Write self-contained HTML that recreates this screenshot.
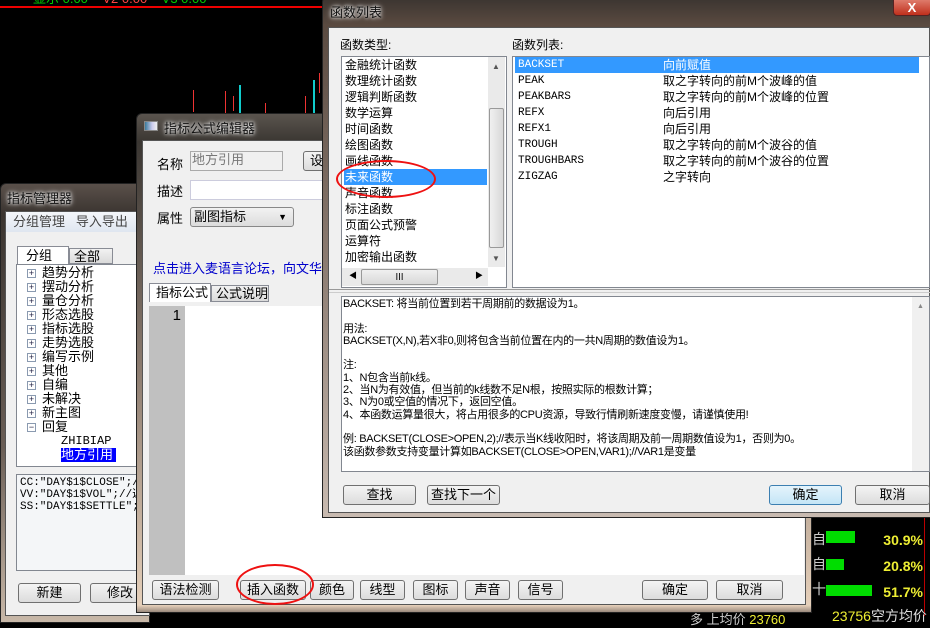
<!DOCTYPE html>
<html><head><meta charset="utf-8">
<style>
*{box-sizing:border-box;margin:0;padding:0}
body{width:930px;height:616px;background:#000;position:relative;overflow:hidden;font-family:"Liberation Sans","Noto Sans CJK SC",sans-serif;font-size:12px;color:#000}
.a{position:absolute}
.win{position:absolute;background:linear-gradient(180deg,#5a504a,#3a3430 30px,#6a5e56 60%,#c8b8a8);border:1px solid #222;border-radius:6px 6px 0 0}
.title{position:absolute;font-size:13px;color:#111;text-shadow:0 0 6px #fff,0 0 3px #fff}
.client{position:absolute;background:#f0f0f0;border:1px solid #555}
.btn{position:absolute;height:20px;border:1px solid #707070;border-radius:3px;background:linear-gradient(#f4f4f4,#dcdcdc);text-align:center;line-height:18px;font-size:13px}
.btnb{border-color:#3c7fb1;background:linear-gradient(#e5f4fc,#c4e5f6)}
.box{position:absolute;background:#fff;border:1px solid #828790}
.li{height:16px;line-height:16px;white-space:nowrap}
.tr{position:absolute;left:27px;height:14px;line-height:14px;font-size:13px;white-space:nowrap}
.tr i{display:inline-block;width:9px;height:9px;border:1px solid #8a9ab0;font-style:normal;font-size:9px;line-height:7px;text-align:center;color:#224;margin-right:6px;vertical-align:1px;background:#fff}
.mono{font-family:"Liberation Mono","Noto Sans CJK SC",monospace}
</style></head><body>
<!-- chart bg -->
<div class="a" style="left:0;top:6px;width:322px;height:2px;background:#e00"></div>
<div class="a" style="left:33px;top:-12px;color:#0c0;font-size:13px">显示 0.00 &nbsp;&nbsp;&nbsp;<span style="color:#f44">V2 0.00</span> &nbsp;&nbsp;&nbsp;V3 0.00</div>
<div class="a" style="left:193px;top:90px;width:1px;height:22px;background:#e33"></div>
<div class="a" style="left:225px;top:91px;width:1px;height:22px;background:#e33"></div>
<div class="a" style="left:239px;top:85px;width:2px;height:28px;background:#1cc"></div>
<div class="a" style="left:233px;top:96px;width:1px;height:15px;background:#e33"></div>
<div class="a" style="left:265px;top:103px;width:1px;height:10px;background:#e33"></div>
<div class="a" style="left:305px;top:96px;width:1px;height:18px;background:#e33"></div>
<div class="a" style="left:313px;top:80px;width:2px;height:33px;background:#1cc"></div>
<div class="a" style="left:319px;top:73px;width:1px;height:20px;background:#e33"></div>

<!-- left manager window -->
<div class="win" style="left:0;top:183px;width:150px;height:440px"></div>
<div class="title" style="left:7px;top:188px">指标管理器</div>
<div class="client" style="left:5px;top:211px;width:145px;height:405px"></div>
<div class="a" style="left:6px;top:212px;width:140px;height:20px;background:linear-gradient(#f4f6fa,#dfe6f0);color:#444;font-size:13px;line-height:20px;padding-left:7px">分组管理 &nbsp; 导入导出</div>
<div class="a" style="left:17px;top:246px;width:52px;height:19px;background:#fff;border:1px solid #898c95;border-bottom:none;font-size:13px;padding-left:8px;line-height:17px">分组</div>
<div class="a" style="left:69px;top:248px;width:44px;height:16px;background:linear-gradient(#f2f2f2,#dadada);border:1px solid #898c95;font-size:13px;padding-left:4px;line-height:15px">全部</div>
<div class="box" style="left:16px;top:264px;width:130px;height:203px"></div>
<div class="tr" style="top:266px"><i>+</i>趋势分析</div>
<div class="tr" style="top:280px"><i>+</i>摆动分析</div>
<div class="tr" style="top:294px"><i>+</i>量仓分析</div>
<div class="tr" style="top:308px"><i>+</i>形态选股</div>
<div class="tr" style="top:322px"><i>+</i>指标选股</div>
<div class="tr" style="top:336px"><i>+</i>走势选股</div>
<div class="tr" style="top:350px"><i>+</i>编写示例</div>
<div class="tr" style="top:364px"><i>+</i>其他</div>
<div class="tr" style="top:378px"><i>+</i>自编</div>
<div class="tr" style="top:392px"><i>+</i>未解决</div>
<div class="tr" style="top:406px"><i>+</i>新主图</div>
<div class="tr" style="top:420px"><i>−</i>回复</div>
<div class="a mono" style="left:61px;top:434px;font-size:12px">ZHIBIAP</div>
<div class="a" style="left:61px;top:448px;background:#00f;color:#fff;font-size:13px;height:14px;line-height:14px;padding-right:3px">地方引用</div>
<div class="box" style="left:16px;top:474px;width:130px;height:97px;background:#f4f6f8"></div>
<div class="a mono" style="left:20px;top:477px;font-size:11px;line-height:12px;white-space:pre">CC:"DAY$1$CLOSE";//
VV:"DAY$1$VOL";//返
SS:"DAY$1$SETTLE";/</div>
<div class="btn" style="left:18px;top:583px;width:63px">新建</div>
<div class="btn" style="left:90px;top:583px;width:60px">修改</div>

<!-- editor window -->
<div class="win" style="left:136px;top:113px;width:676px;height:500px;background:linear-gradient(180deg,#5a544e,#3a3632 28px,#8a7a6e 50%,#e8d2bc)"></div>
<div class="a" style="left:144px;top:121px;width:14px;height:10px;background:linear-gradient(90deg,#3a7a9a,#cce 60%,#eee);border:1px solid #888"></div>
<div class="title" style="left:164px;top:118px">指标公式编辑器</div>
<div class="client" style="left:142px;top:140px;width:664px;height:465px"></div>
<div class="a" style="left:157px;top:154px;font-size:13px">名称</div>
<div class="a" style="left:190px;top:151px;width:93px;height:20px;border:1px solid #aaa;background:#f0f0f0;color:#777;font-size:13px;padding-left:1px;line-height:16px">地方引用</div>
<div class="btn" style="left:303px;top:151px;width:40px">设置</div>
<div class="a" style="left:157px;top:181px;font-size:13px">描述</div>
<div class="a" style="left:190px;top:180px;width:150px;height:20px;border:1px solid #ccd;background:#fff"></div>
<div class="a" style="left:157px;top:208px;font-size:13px">属性</div>
<div class="a" style="left:190px;top:207px;width:104px;height:20px;border:1px solid #888;border-radius:3px;background:linear-gradient(#f2f2f2,#dcdcdc);font-size:13px;line-height:18px;padding-left:3px">副图指标<span style="position:absolute;right:6px;font-size:9px">▼</span></div>
<div class="a" style="left:153px;top:258px;color:#00c;font-size:13px;white-space:nowrap">点击进入麦语言论坛，向文华技</div>
<div class="a" style="left:149px;top:283px;width:62px;height:19px;background:#fff;border:1px solid #898c95;border-bottom:none;font-size:13px;line-height:17px;padding-left:6px">指标公式</div>
<div class="a" style="left:211px;top:285px;width:58px;height:17px;background:linear-gradient(#f2f2f2,#dadada);border:1px solid #898c95;font-size:13px;line-height:15px;padding-left:4px">公式说明</div>
<div class="a" style="left:149px;top:306px;width:655px;height:269px;background:#fff"></div>
<div class="a" style="left:149px;top:306px;width:36px;height:269px;background:#c0c0c0;font-size:15px;text-align:right;padding-right:4px;line-height:20px">1</div>
<div class="btn" style="left:152px;top:580px;width:67px">语法检测</div>
<div class="btn" style="left:240px;top:580px;width:66px">插入函数</div>
<div class="btn" style="left:310px;top:580px;width:44px">颜色</div>
<div class="btn" style="left:360px;top:580px;width:45px">线型</div>
<div class="btn" style="left:413px;top:580px;width:45px">图标</div>
<div class="btn" style="left:465px;top:580px;width:45px">声音</div>
<div class="btn" style="left:518px;top:580px;width:45px">信号</div>
<div class="btn" style="left:642px;top:580px;width:66px">确定</div>
<div class="btn" style="left:716px;top:580px;width:67px">取消</div>
<div class="a" style="left:236px;top:564px;width:78px;height:41px;border:2px solid #e11;border-radius:50%"></div>

<!-- right black info -->
<div class="a" style="left:812px;top:527px;color:#ccc;font-size:14px;line-height:25px">自<br>自<br>十</div>
<div class="a" style="left:826px;top:531px;width:29px;height:12px;background:#0d0"></div>
<div class="a" style="left:826px;top:559px;width:18px;height:11px;background:#0d0"></div>
<div class="a" style="left:826px;top:585px;width:46px;height:11px;background:#0d0"></div>
<div class="a" style="left:878px;top:527px;width:45px;text-align:right;color:#ee3;font-size:14px;font-weight:bold;line-height:26px">30.9%<br>20.8%<br>51.7%</div>
<div class="a" style="left:924px;top:518px;width:1px;height:98px;background:#b00"></div>
<div class="a" style="left:832px;top:606px;color:#ee3;font-size:14px">23756<span style="color:#ddd">空方均价</span></div>
<div class="a" style="left:690px;top:609px;color:#ccc;font-size:13px">多 上均价 <span style="color:#ee3">23760</span></div>
<div class="a" style="left:136px;top:605px;width:676px;height:8px;background:linear-gradient(#e8d2bc,#9a8a7e);border:1px solid #222;border-top:none"></div>

<!-- function list dialog -->
<div class="win" style="left:322px;top:-4px;width:612px;height:522px;background:linear-gradient(180deg,#3a3430,#5a4a40 28px,#8a7a70 50%,#c8bab0)"></div>
<div class="title" style="left:330px;top:2px">函数列表</div>
<div class="a" style="left:893px;top:-2px;width:38px;height:18px;background:linear-gradient(#e08070,#c0301c);border:1px solid #522;border-radius:0 0 4px 4px;color:#fff;font-weight:bold;text-align:center;line-height:18px;font-size:13px">X</div>
<div class="client" style="left:328px;top:27px;width:602px;height:486px"></div>
<div class="a" style="left:340px;top:36px">函数类型:</div>
<div class="a" style="left:512px;top:36px">函数列表:</div>
<div class="box" style="left:341px;top:56px;width:166px;height:232px"></div>
<div class="a" style="left:345px;top:57px;width:142px;font-size:12px">
<div class="li">金融统计函数</div><div class="li">数理统计函数</div><div class="li">逻辑判断函数</div><div class="li">数学运算</div><div class="li">时间函数</div><div class="li">绘图函数</div><div class="li">画线函数</div><div class="li" style="background:#3399ff;color:#fff;margin-left:-1px;padding-left:1px">未来函数</div><div class="li">声音函数</div><div class="li">标注函数</div><div class="li">页面公式预警</div><div class="li">运算符</div><div class="li">加密输出函数</div></div>
<div class="a" style="left:488px;top:57px;width:17px;height:210px;background:#eaeaea"></div>
<div class="a" style="left:489px;top:108px;width:15px;height:140px;border:1px solid #999;border-radius:2px;background:linear-gradient(90deg,#f0f0f0,#d8d8d8)"></div>
<div class="a" style="left:492px;top:62px;font-size:8px;color:#555">▲</div>
<div class="a" style="left:492px;top:254px;font-size:8px;color:#555">▼</div>
<div class="a" style="left:342px;top:268px;width:146px;height:18px;background:#eaeaea"></div>
<div class="a" style="left:361px;top:269px;width:77px;height:16px;border:1px solid #999;border-radius:2px;background:linear-gradient(#f0f0f0,#d8d8d8);text-align:center;font-size:9px;line-height:14px">Ⅲ</div>
<div class="a" style="left:349px;top:270px;font-size:8px">◀</div>
<div class="a" style="left:475px;top:270px;font-size:8px">▶</div>
<div class="a" style="left:336px;top:160px;width:100px;height:38px;border:2px solid #e11;border-radius:50%"></div>

<div class="box" style="left:512px;top:56px;width:418px;height:232px"></div>
<div class="a mono" style="left:515px;top:57px;width:404px;font-size:11px">
<div class="li" style="background:#3399ff;color:#fff;padding-left:3px">BACKSET<span style="position:absolute;left:148px;font-family:'Liberation Sans','Noto Sans CJK SC';font-size:12px">向前赋值</span></div>
<div class="li" style="padding-left:3px;position:relative">PEAK<span style="position:absolute;left:148px;font-family:'Liberation Sans','Noto Sans CJK SC';font-size:12px">取之字转向的前M个波峰的值</span></div>
<div class="li" style="padding-left:3px;position:relative">PEAKBARS<span style="position:absolute;left:148px;font-family:'Liberation Sans','Noto Sans CJK SC';font-size:12px">取之字转向的前M个波峰的位置</span></div>
<div class="li" style="padding-left:3px;position:relative">REFX<span style="position:absolute;left:148px;font-family:'Liberation Sans','Noto Sans CJK SC';font-size:12px">向后引用</span></div>
<div class="li" style="padding-left:3px;position:relative">REFX1<span style="position:absolute;left:148px;font-family:'Liberation Sans','Noto Sans CJK SC';font-size:12px">向后引用</span></div>
<div class="li" style="padding-left:3px;position:relative">TROUGH<span style="position:absolute;left:148px;font-family:'Liberation Sans','Noto Sans CJK SC';font-size:12px">取之字转向的前M个波谷的值</span></div>
<div class="li" style="padding-left:3px;position:relative">TROUGHBARS<span style="position:absolute;left:148px;font-family:'Liberation Sans','Noto Sans CJK SC';font-size:12px">取之字转向的前M个波谷的位置</span></div>
<div class="li" style="padding-left:3px;position:relative">ZIGZAG<span style="position:absolute;left:148px;font-family:'Liberation Sans','Noto Sans CJK SC';font-size:12px">之字转向</span></div>
</div>
<div class="a" style="left:329px;top:289px;width:601px;height:4px;border-top:1px solid #999;border-bottom:1px solid #ccc"></div>
<div class="box" style="left:341px;top:296px;width:589px;height:176px"></div>
<div class="a" style="left:912px;top:297px;width:17px;height:174px;background:#f0f0f0;font-size:7px;color:#888;text-align:center;padding-top:6px">▲</div>
<div class="a" style="left:343px;top:298px;font-size:11px;line-height:12.3px;white-space:pre;letter-spacing:-0.3px">BACKSET: 将当前位置到若干周期前的数据设为1。

用法:
BACKSET(X,N),若X非0,则将包含当前位置在内的一共N周期的数值设为1。

注:
1、N包含当前k线。
2、当N为有效值，但当前的k线数不足N根，按照实际的根数计算；
3、N为0或空值的情况下，返回空值。
4、本函数运算量很大，将占用很多的CPU资源，导致行情刷新速度变慢，请谨慎使用!

例: BACKSET(CLOSE>OPEN,2);//表示当K线收阳时，将该周期及前一周期数值设为1，否则为0。
该函数参数支持变量计算如BACKSET(CLOSE>OPEN,VAR1);//VAR1是变量</div>
<div class="btn" style="left:343px;top:485px;width:73px">查找</div>
<div class="btn" style="left:427px;top:485px;width:73px">查找下一个</div>
<div class="btn btnb" style="left:769px;top:485px;width:73px">确定</div>
<div class="btn" style="left:855px;top:485px;width:75px">取消</div>
</body></html>
